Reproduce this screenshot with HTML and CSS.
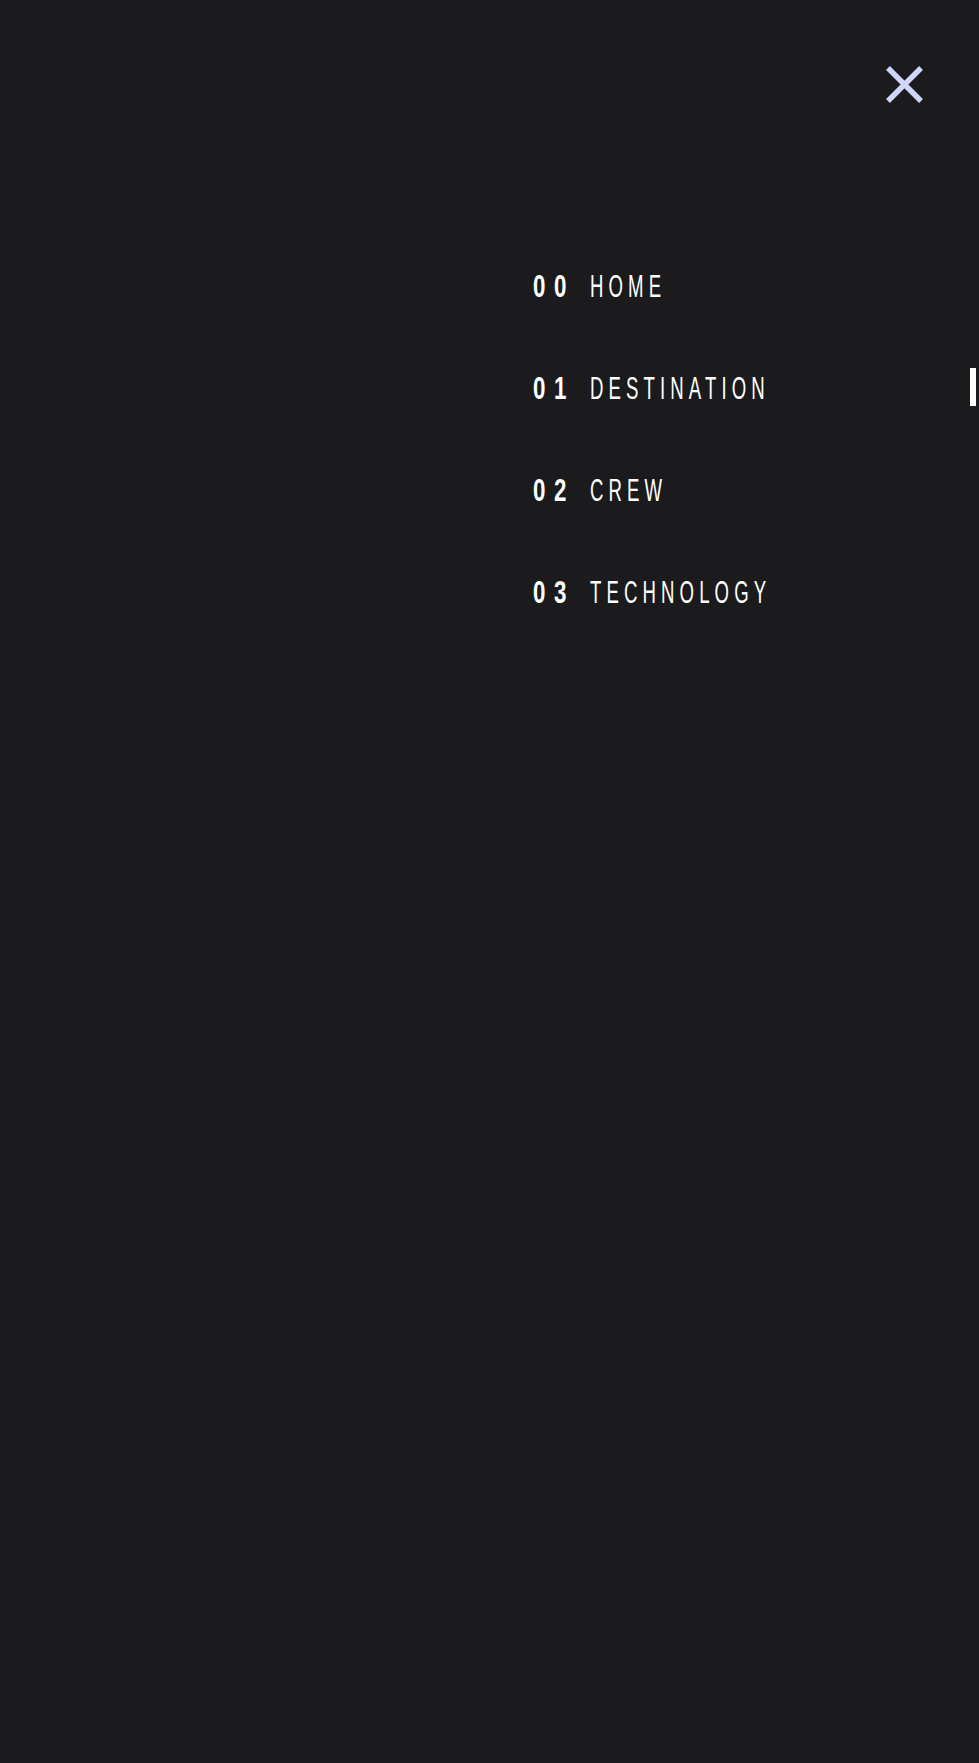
FILE: index.html
```html
<!DOCTYPE html>
<html lang="en">
<head>
<meta charset="utf-8">
<title>Space tourism — menu</title>
<link rel="stylesheet" href="styles.css">
</head>
<body>
<div class="panel">
  <header class="top">
    <button class="close" aria-label="Close menu">
      <svg width="38" height="37" viewBox="0 0 21.1 20.6" preserveAspectRatio="none" aria-hidden="true">
        <g fill="#D0D6F9" fill-rule="evenodd">
          <path d="M2.697.04l18.384 18.385-2.122 2.121L.575 2.161z"/>
          <path d="M.575 18.425L18.96.04l2.121 2.122L2.697 20.546z"/>
        </g>
      </svg>
    </button>
  </header>
  <nav class="menu">
    <ul class="menu-list">
      <li class="menu-item"><span class="num">00</span><span class="label">HOME</span></li>
      <li class="menu-item active"><span class="num">01</span><span class="label">DESTINATION</span></li>
      <li class="menu-item"><span class="num">02</span><span class="label">CREW</span></li>
      <li class="menu-item"><span class="num">03</span><span class="label">TECHNOLOGY</span></li>
    </ul>
  </nav>
</div>
</body>
</html>
```

FILE: styles.css
```css
* { box-sizing: border-box; }
html, body { margin: 0; padding: 0; }
body {
  background: #1b1b1d;
  color: #ffffff;
  font-family: "Liberation Sans", Arial, sans-serif;
  min-height: 1763px;
}
.panel {
  display: flex;
  flex-direction: column;
}
.top {
  display: flex;
  justify-content: flex-end;
  padding: 66px 56px 0 0;
}
.close {
  display: block;
  width: 38px;
  height: 37px;
  padding: 0;
  border: 0;
  background: transparent;
  cursor: pointer;
}
.close svg { display: block; }
.menu {
  margin-top: 163px;
  padding-left: 533px;
  margin-right: 3px;
}
.menu-list {
  list-style: none;
  margin: 0;
  padding: 0;
  display: flex;
  flex-direction: column;
  gap: 64px;
}
.menu-item {
  height: 38px;
  display: grid;
  grid-template-columns: 57px 1fr;
  align-items: start;
  font-size: 31px;
  line-height: 42.5px;
  border-right: 6px solid transparent;
  white-space: nowrap;
}
.menu-item.active { border-right-color: #ffffff; }
.num {
  display: inline-block;
  font-weight: 700;
  letter-spacing: 12px;
  transform: scaleX(0.72);
  transform-origin: left center;
}
.label {
  display: inline-block;
  font-weight: 400;
  letter-spacing: 8.5px;
  transform: scaleX(0.6);
  transform-origin: left center;
}
```
